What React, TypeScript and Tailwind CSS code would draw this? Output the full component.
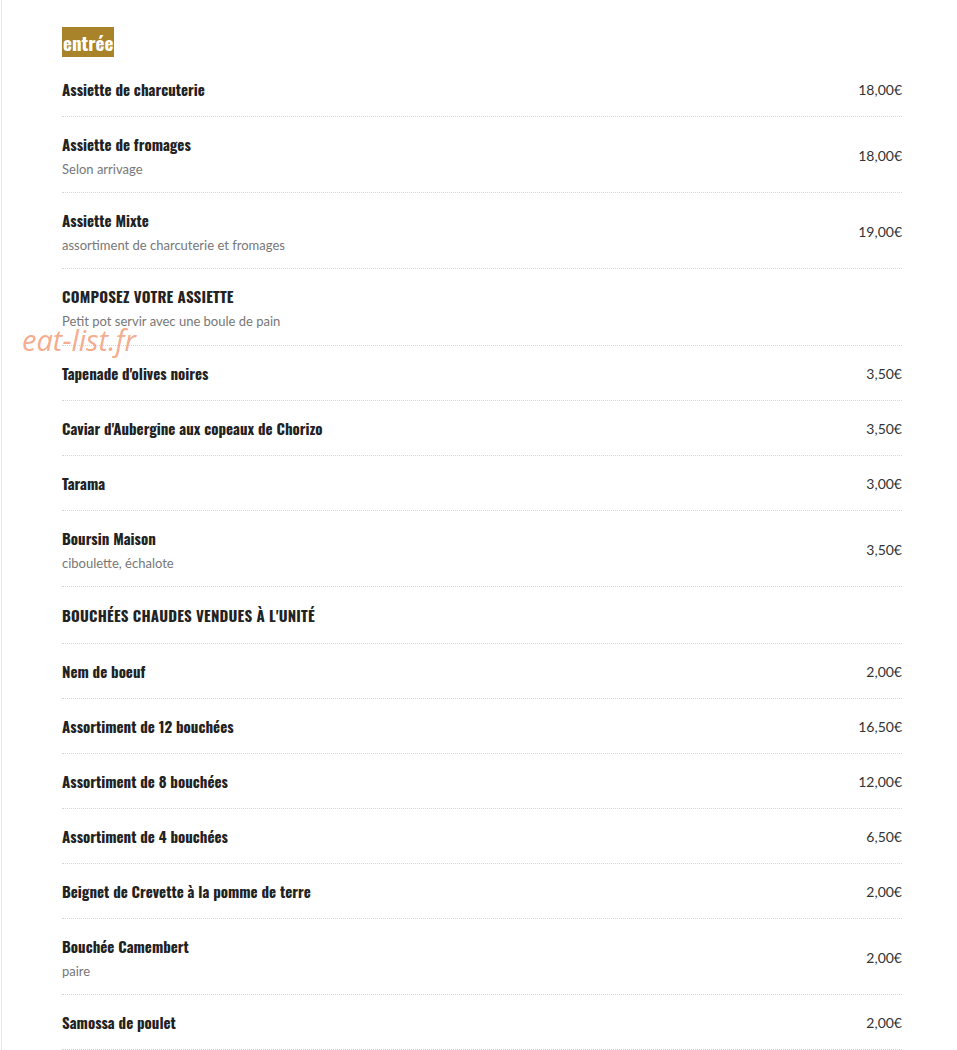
import React from "react";

type Item = { name: string; desc?: string; price?: string; header?: boolean };

const items: Item[] = [
  { name: "Assiette de charcuterie", price: "18,00€" },
  { name: "Assiette de fromages", desc: "Selon arrivage", price: "18,00€" },
  { name: "Assiette Mixte", desc: "assortiment de charcuterie et fromages", price: "19,00€" },
  { name: "COMPOSEZ VOTRE ASSIETTE", desc: "Petit pot servir avec une boule de pain", header: true },
  { name: "Tapenade d'olives noires", price: "3,50€" },
  { name: "Caviar d'Aubergine aux copeaux de Chorizo", price: "3,50€" },
  { name: "Tarama", price: "3,00€" },
  { name: "Boursin Maison", desc: "ciboulette, échalote", price: "3,50€" },
  { name: "BOUCHÉES CHAUDES VENDUES À L'UNITÉ", header: true },
  { name: "Nem de boeuf", price: "2,00€" },
  { name: "Assortiment de 12 bouchées", price: "16,50€" },
  { name: "Assortiment de 8 bouchées", price: "12,00€" },
  { name: "Assortiment de 4 bouchées", price: "6,50€" },
  { name: "Beignet de Crevette à la pomme de terre", price: "2,00€" },
  { name: "Bouchée Camembert", desc: "paire", price: "2,00€" },
  { name: "Samossa de poulet", price: "2,00€" },
];

const titleFont = "font-['Oswald','Liberation_Sans_Narrow','DejaVu_Sans_Condensed',sans-serif]";

function MenuRow({ item }: { item: Item }) {
  let pad = "pt-[15px] pb-[15px]";
  if (item.desc) pad = item.header ? "pt-[15px] pb-[15px]" : "pt-[15px] pb-[14px]";
  else if (item.header) pad = "pt-[16px] pb-[16px]";
  return (
    <div className={`flex items-center justify-between border-b border-dotted border-[#d6d6d6] ${pad}`}>
      <div>
        <div
          className={`${titleFont} text-[15px] leading-[24px] font-bold text-[#222] ${
            item.header ? "tracking-[0.2px]" : ""
          }`}
        >
          {item.name}
        </div>
        {item.desc && (
          <div className="mt-[4px] font-['Lato',sans-serif] text-[13px] leading-[18px] text-[#777]">
            {item.desc}
          </div>
        )}
      </div>
      {item.price && (
        <div className="font-['Lato',sans-serif] text-[14px] text-[#333]">{item.price}</div>
      )}
    </div>
  );
}

export default function App() {
  return (
    <div className="relative min-h-[1050px] bg-white ml-px border-l border-[#e6e6e6] overflow-hidden">
      <div className="w-[840px] ml-[60px] pt-[27px]">
        <div className="mb-[5px]">
          <span
            className={`${titleFont} inline-block bg-[#a9832a] px-[1px] text-[19px] leading-[30px] font-bold text-white`}
          >
            entrée
          </span>
        </div>
        {items.map((it, i) => (
          <MenuRow key={i} item={it} />
        ))}
      </div>

      {/* watermark */}
      <div className="absolute left-[20px] top-[318px] font-['Open_Sans',sans-serif] italic text-[29px] text-[#f3a27e]/90 pointer-events-none">
        eat-list.fr
      </div>
    </div>
  );
}
